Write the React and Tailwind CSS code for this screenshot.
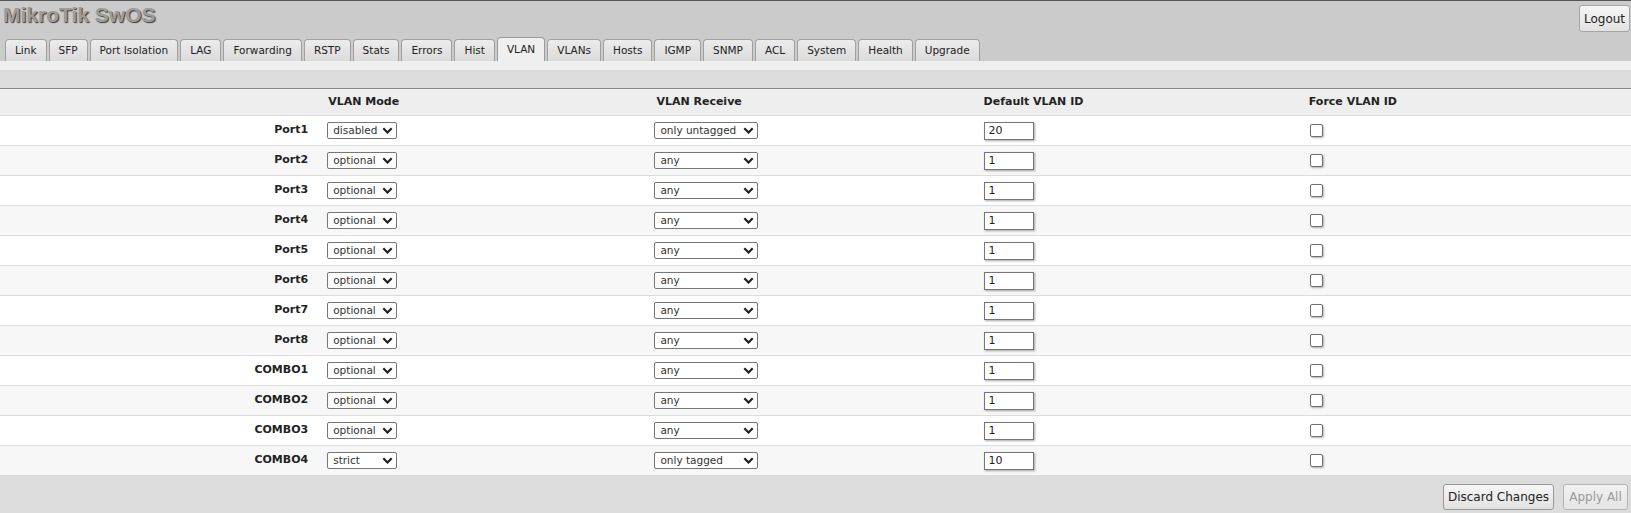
import React, { useState } from "react";

const tabs = [
  "Link",
  "SFP",
  "Port Isolation",
  "LAG",
  "Forwarding",
  "RSTP",
  "Stats",
  "Errors",
  "Hist",
  "VLAN",
  "VLANs",
  "Hosts",
  "IGMP",
  "SNMP",
  "ACL",
  "System",
  "Health",
  "Upgrade",
];

const modeOptions = ["disabled", "optional", "enabled", "strict"];
const receiveOptions = ["any", "only tagged", "only untagged"];

const initialPorts = [
  { name: "Port1", mode: "disabled", receive: "only untagged", vid: "20" },
  { name: "Port2", mode: "optional", receive: "any", vid: "1" },
  { name: "Port3", mode: "optional", receive: "any", vid: "1" },
  { name: "Port4", mode: "optional", receive: "any", vid: "1" },
  { name: "Port5", mode: "optional", receive: "any", vid: "1" },
  { name: "Port6", mode: "optional", receive: "any", vid: "1" },
  { name: "Port7", mode: "optional", receive: "any", vid: "1" },
  { name: "Port8", mode: "optional", receive: "any", vid: "1" },
  { name: "COMBO1", mode: "optional", receive: "any", vid: "1" },
  { name: "COMBO2", mode: "optional", receive: "any", vid: "1" },
  { name: "COMBO3", mode: "optional", receive: "any", vid: "1" },
  { name: "COMBO4", mode: "strict", receive: "only tagged", vid: "10" },
];

function Select({ value, options, width, onChange }) {
  return (
    <div className={`relative ${width} h-[17px]`}>
      <select
        value={value}
        onChange={(e) => onChange(e.target.value)}
        className="appearance-none w-full h-full border border-[#767676] rounded-[2px] bg-white pl-[5px] pr-[16px] text-[10.5px] leading-[15px] text-[#333] outline-none"
      >
        {options.map((o) => (
          <option key={o} value={o}>
            {o}
          </option>
        ))}
      </select>
      <svg
        width="11"
        height="7"
        viewBox="0 0 11 7"
        className="pointer-events-none absolute right-[4px] top-[5px]"
      >
        <path d="M1.3 1.3 L5.5 5.5 L9.7 1.3" fill="none" stroke="#222" strokeWidth="2.2" />
      </svg>
    </div>
  );
}

function App() {
  const [ports, setPorts] = useState(initialPorts);
  const [force, setForce] = useState(initialPorts.map(() => false));

  const update = (i, key, val) => {
    setPorts(ports.map((p, idx) => (idx === i ? { ...p, [key]: val } : p)));
  };

  return (
    <div className="w-full font-['DejaVu_Sans',Verdana,sans-serif] text-[11px] text-[#222] bg-white">
      {/* top bar */}
      <div className="h-[61px] bg-[#cbcbcb] border-t border-[#555] flex flex-col">
        <div className="h-[37px] flex justify-between items-start">
          <div className="pl-[3px] pt-[3px] font-['Liberation_Sans',Arial,sans-serif] font-bold text-[21px] leading-none text-[#9c9c9c] [text-shadow:1px_1px_1px_#3a3a3a]">
            MikroTik SwOS
          </div>
          <button className="mt-[4px] mr-[1px] h-[27px] w-[51px] border border-[#a5a5a5] rounded-[3px] bg-gradient-to-b from-[#f6f6f6] to-[#e2e2e2] text-[12px] text-[#222]">
            Logout
          </button>
        </div>
        <div className="flex-1 flex items-end gap-[2px] pl-[5px] text-[10.5px]">
          {tabs.map((t) =>
            t === "VLAN" ? (
              <div
                key={t}
                className="h-[24px] px-[9px] pt-[1px] flex items-center border border-b-0 border-[#9a9a9a] rounded-t-[4px] bg-[#efefef] text-[#222]"
              >
                {t}
              </div>
            ) : (
              <div
                key={t}
                className="h-[22px] px-[9px] pt-[1px] flex items-center border border-b-0 border-[#a0a0a0] rounded-t-[4px] bg-gradient-to-b from-[#ececec] to-[#dbdbdb] text-[#222]"
              >
                {t}
              </div>
            )
          )}
        </div>
      </div>
      <div className="h-[9px] bg-[#efefef]" />
      <div className="h-[19px] bg-[#dcdcdc] border-b border-[#888]" />

      {/* table header */}
      <div className="grid grid-cols-5 h-[27px] items-center bg-[#eeeeee] border-b border-[#dcdcdc] font-bold">
        <div />
        <div className="pl-[2px]">VLAN Mode</div>
        <div className="pl-[4px]">VLAN Receive</div>
        <div className="pl-[5px]">Default VLAN ID</div>
        <div className="pl-[4px]">Force VLAN ID</div>
      </div>

      {ports.map((p, i) => (
        <div
          key={p.name}
          className={`grid grid-cols-5 h-[30px] items-center border-b border-[#dcdcdc] ${
            i % 2 === 0 ? "bg-white" : "bg-[#f7f7f7]"
          }`}
        >
          <div className="text-right pr-[18px] font-bold">{p.name}</div>
          <div className="pl-[1px]">
            <Select
              value={p.mode}
              options={modeOptions}
              width="w-[70px]"
              onChange={(v) => update(i, "mode", v)}
            />
          </div>
          <div className="pl-[2px]">
            <Select
              value={p.receive}
              options={receiveOptions}
              width="w-[104px]"
              onChange={(v) => update(i, "receive", v)}
            />
          </div>
          <div className="pl-[5px] flex">
            <input
              type="text"
              value={p.vid}
              onChange={(e) => update(i, "vid", e.target.value)}
              className="w-[50px] h-[18px] border border-[#767676] bg-white px-[4px] text-[11px] text-[#222] shadow-[1px_1px_2px_rgba(0,0,0,0.35)] outline-none"
            />
          </div>
          <div className="pl-[5px] flex">
            <input
              type="checkbox"
              checked={force[i]}
              onChange={() => setForce(force.map((f, idx) => (idx === i ? !f : f)))}
              className="appearance-none w-[13px] h-[13px] border border-[#707070] rounded-[2px] bg-white shadow-[1px_1px_2px_rgba(0,0,0,0.3)] checked:bg-[#0075ff]"
            />
          </div>
        </div>
      ))}

      {/* footer */}
      <div className="h-[37px] bg-[#dcdcdc] flex justify-end items-start pt-[8px] pr-[3px] gap-[9px]">
        <button
          onClick={() => {
            setPorts(initialPorts);
            setForce(initialPorts.map(() => false));
          }}
          className="h-[26px] w-[111px] border border-[#999] rounded-[3px] bg-gradient-to-b from-[#f6f6f6] to-[#e2e2e2] text-[12px] text-[#222]"
        >
          Discard Changes
        </button>
        <button
          disabled
          className="h-[26px] w-[65px] border border-[#b5b5b5] rounded-[3px] bg-gradient-to-b from-[#f2f2f2] to-[#e4e4e4] text-[12px] text-[#999]"
        >
          Apply All
        </button>
      </div>
    </div>
  );
}

export default App;
